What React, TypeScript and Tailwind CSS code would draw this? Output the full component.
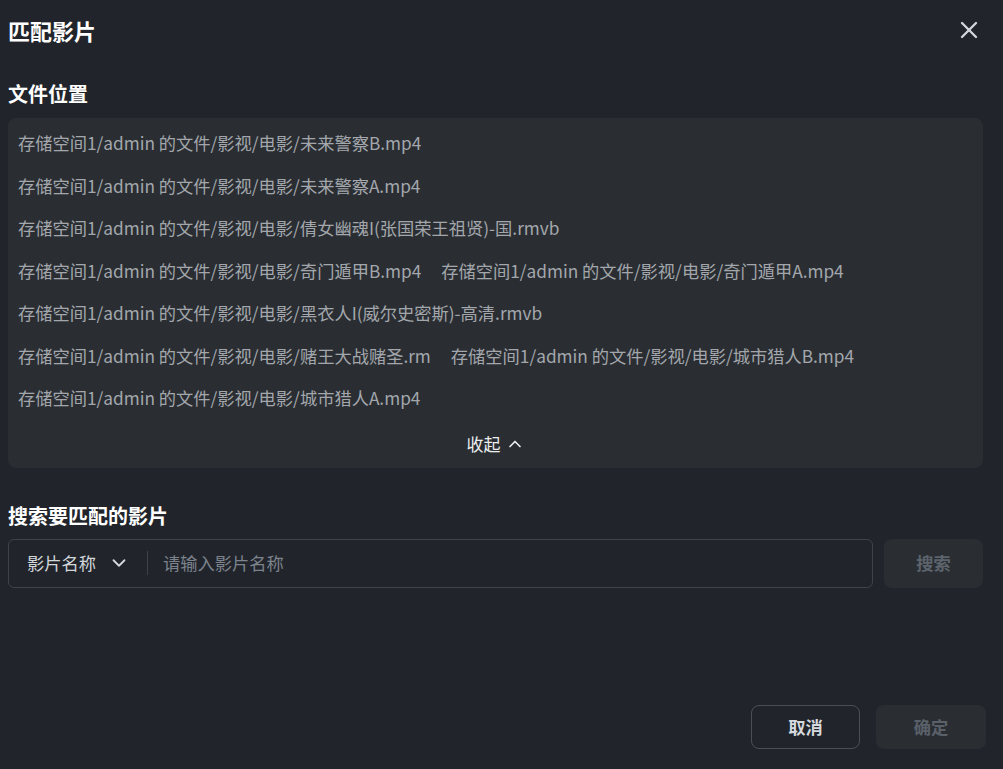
import { ChevronDown, ChevronUp, X } from 'lucide-react';

const base = '存储空间1/admin 的文件/影视/电影/';

const rows = [
  ['未来警察B.mp4'],
  ['未来警察A.mp4'],
  ['倩女幽魂I(张国荣王祖贤)-国.rmvb'],
  ['奇门遁甲B.mp4', '奇门遁甲A.mp4'],
  ['黑衣人I(威尔史密斯)-高清.rmvb'],
  ['赌王大战赌圣.rm', '城市猎人B.mp4'],
  ['城市猎人A.mp4'],
];

export default function App() {
  return (
    <div className="flex h-screen flex-col bg-[#21252b] pl-2 pr-[17px] pb-5 font-['Noto_Sans_CJK_SC',sans-serif] text-white">
      <div className="mr-[3px] flex h-[60px] items-center justify-between">
        <h1 className="text-[22px] font-bold leading-none">匹配影片</h1>
        <button className="flex h-7 w-7 items-center justify-center text-[#d2d6db]">
          <X size={28} strokeWidth={2} />
        </button>
      </div>

      <div className="mr-[3px]">
        <h2 className="mt-5 mb-2.5 text-[20px] font-bold leading-7">文件位置</h2>
        <div className="rounded-lg bg-[#2a2e33] px-2.5 pt-1">
          {rows.map((row, i) => (
            <div key={i} className="flex h-[42.5px] items-center gap-x-5 text-[17.25px] text-[#a3a7ac]">
              {row.map((name) => (
                <span key={name}>{base + name}</span>
              ))}
            </div>
          ))}
          <div className="flex h-12 items-center justify-center gap-1 text-[17px] text-[#eceef0]">
            收起
            <ChevronUp size={20} strokeWidth={2} />
          </div>
        </div>

        <h2 className="mt-[34px] mb-[9px] text-[20px] font-bold leading-7">搜索要匹配的影片</h2>
        <div className="flex gap-[11px]">
          <div className="flex h-[49px] flex-1 items-center rounded-md border border-[#3e434a] pl-[18px]">
            <button className="flex items-center gap-3 text-[17.25px] text-[#d3d7dc]">
              影片名称
              <ChevronDown size={22} strokeWidth={2} />
            </button>
            <div className="ml-[17px] h-6 w-px bg-[#3e434a]" />
            <input
              className="ml-[15px] flex-1 bg-transparent text-[17.25px] text-white outline-none placeholder:text-[#7c838d]"
              placeholder="请输入影片名称"
            />
          </div>
          <button className="h-[49px] w-[99px] rounded-lg bg-[#2a2e33] text-[17.25px] font-bold text-[#5c636c]">
            搜索
          </button>
        </div>
      </div>

      <div className="mt-auto flex justify-end gap-4">
        <button className="h-[44px] w-[109px] rounded-lg border border-[#4a4f57] text-[17.25px] font-bold text-[#d5d9de]">
          取消
        </button>
        <button className="h-[44px] w-[110px] rounded-lg bg-[#2a2e33] text-[17.25px] font-bold text-[#5a6069]">
          确定
        </button>
      </div>
    </div>
  );
}
